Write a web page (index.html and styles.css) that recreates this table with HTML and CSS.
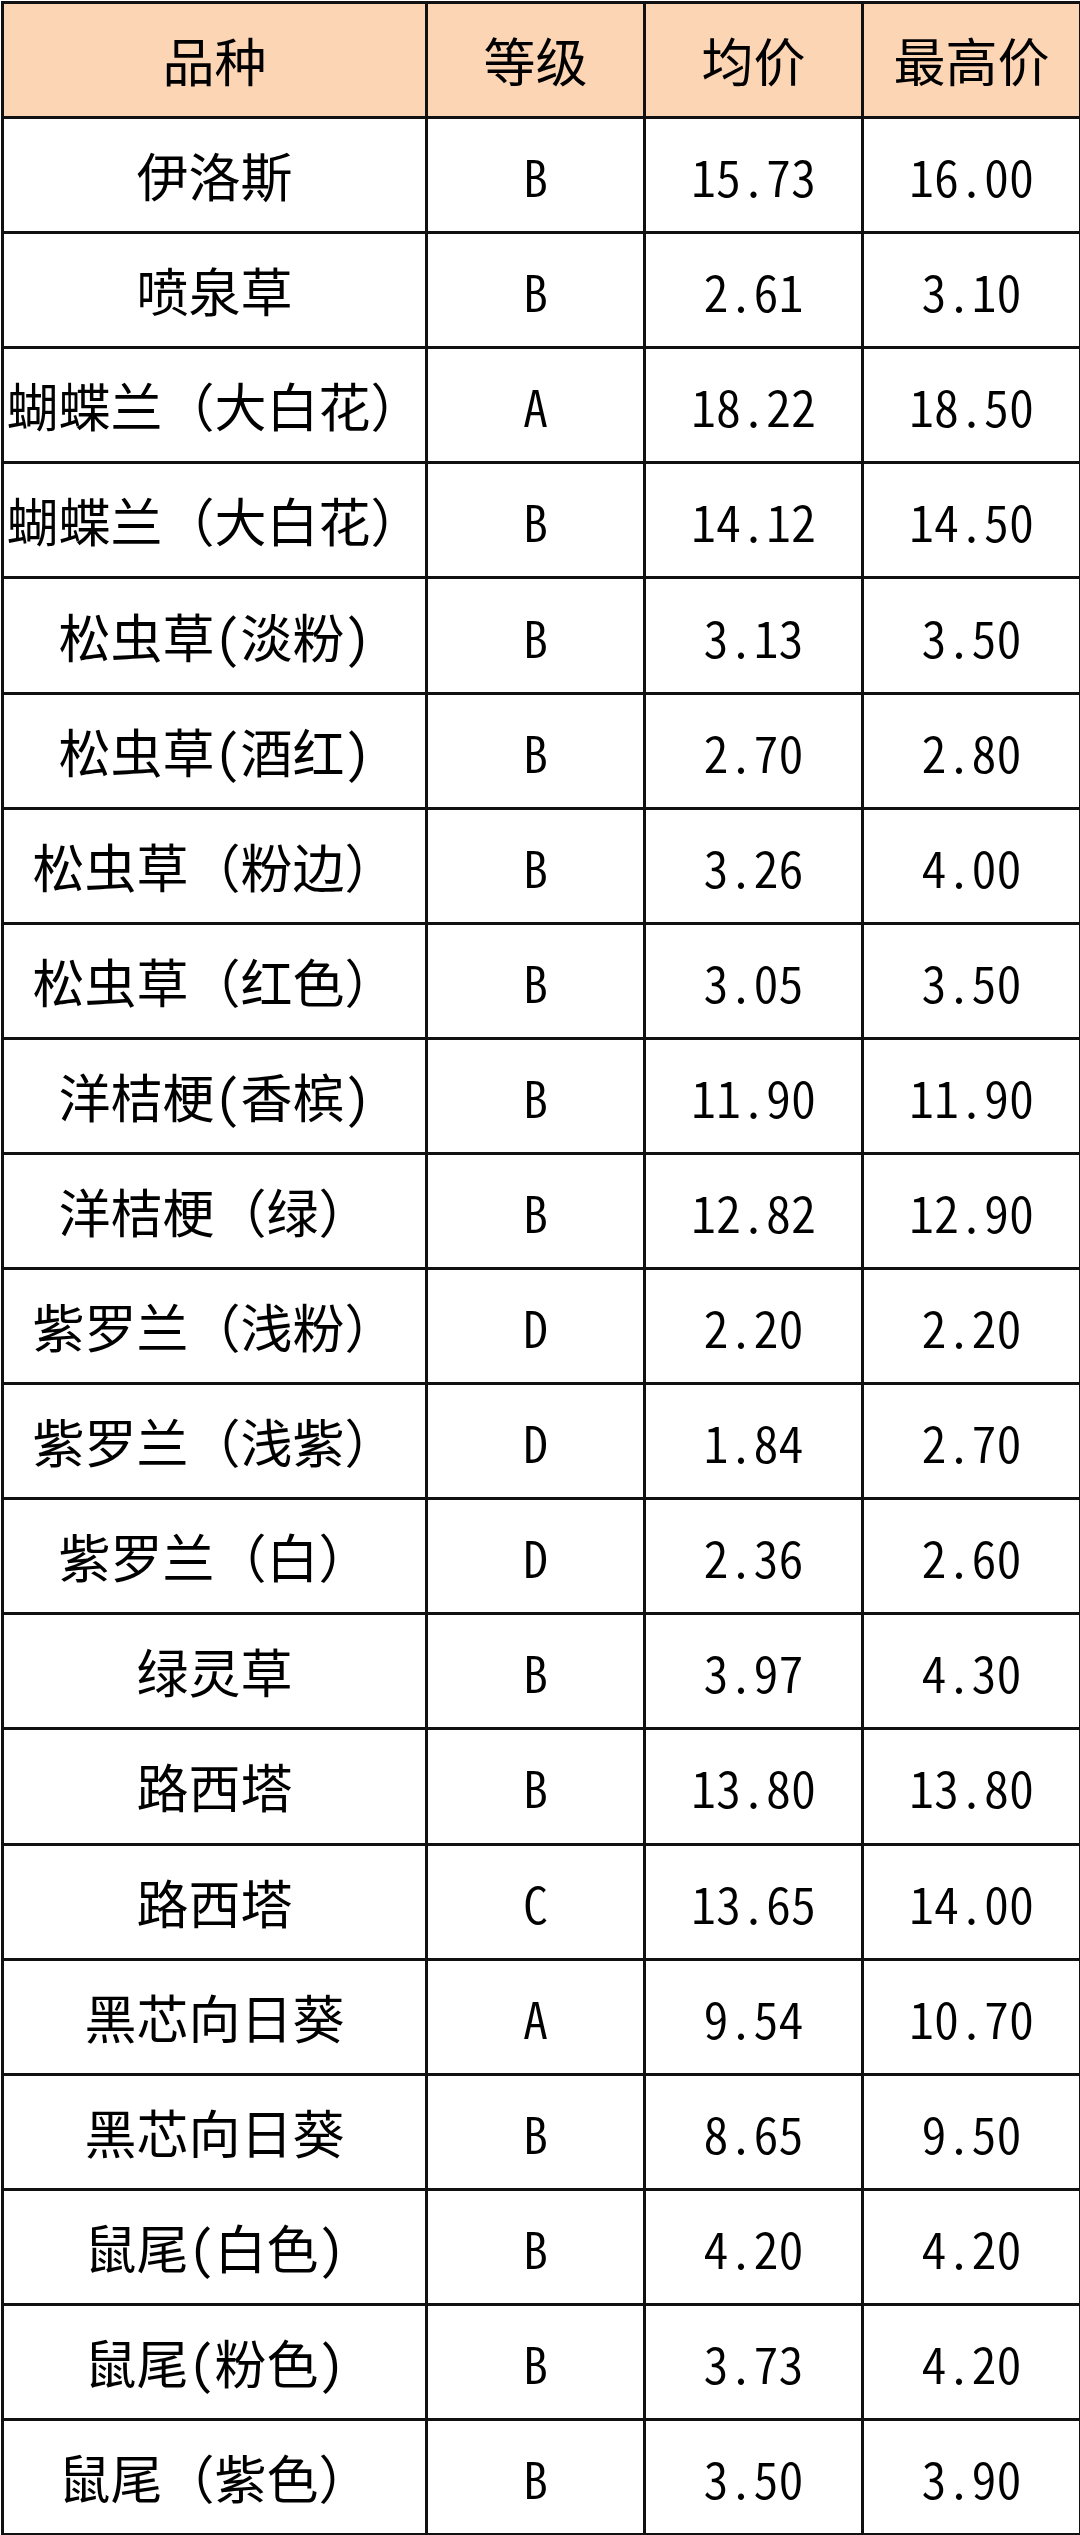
FILE: index.html
```html
<!DOCTYPE html>
<html lang="zh-CN">
<head>
<meta charset="utf-8">
<title>品种价格表</title>
<link rel="stylesheet" href="styles.css">
</head>
<body>
<div class="sheet">
<table class="price-table">
  <colgroup>
    <col class="c-name">
    <col class="c-grade">
    <col class="c-avg">
    <col class="c-max">
  </colgroup>
  <thead>
    <tr><th>品种</th><th>等级</th><th>均价</th><th>最高价</th></tr>
  </thead>
  <tbody>
    <tr><td>伊洛斯</td><td>B</td><td>15.73</td><td>16.00</td></tr>
    <tr><td>喷泉草</td><td>B</td><td>2.61</td><td>3.10</td></tr>
    <tr><td>蝴蝶兰（大白花）</td><td>A</td><td>18.22</td><td>18.50</td></tr>
    <tr><td>蝴蝶兰（大白花）</td><td>B</td><td>14.12</td><td>14.50</td></tr>
    <tr><td>松虫草<span class="hw">(</span>淡粉<span class="hw">)</span></td><td>B</td><td>3.13</td><td>3.50</td></tr>
    <tr><td>松虫草<span class="hw">(</span>酒红<span class="hw">)</span></td><td>B</td><td>2.70</td><td>2.80</td></tr>
    <tr><td>松虫草（粉边）</td><td>B</td><td>3.26</td><td>4.00</td></tr>
    <tr><td>松虫草（红色）</td><td>B</td><td>3.05</td><td>3.50</td></tr>
    <tr><td>洋桔梗<span class="hw">(</span>香槟<span class="hw">)</span></td><td>B</td><td>11.90</td><td>11.90</td></tr>
    <tr><td>洋桔梗（绿）</td><td>B</td><td>12.82</td><td>12.90</td></tr>
    <tr><td>紫罗兰（浅粉）</td><td>D</td><td>2.20</td><td>2.20</td></tr>
    <tr><td>紫罗兰（浅紫）</td><td>D</td><td>1.84</td><td>2.70</td></tr>
    <tr><td>紫罗兰（白）</td><td>D</td><td>2.36</td><td>2.60</td></tr>
    <tr><td>绿灵草</td><td>B</td><td>3.97</td><td>4.30</td></tr>
    <tr><td>路西塔</td><td>B</td><td>13.80</td><td>13.80</td></tr>
    <tr><td>路西塔</td><td>C</td><td>13.65</td><td>14.00</td></tr>
    <tr><td>黑芯向日葵</td><td>A</td><td>9.54</td><td>10.70</td></tr>
    <tr><td>黑芯向日葵</td><td>B</td><td>8.65</td><td>9.50</td></tr>
    <tr><td>鼠尾<span class="hw">(</span>白色<span class="hw">)</span></td><td>B</td><td>4.20</td><td>4.20</td></tr>
    <tr><td>鼠尾<span class="hw">(</span>粉色<span class="hw">)</span></td><td>B</td><td>3.73</td><td>4.20</td></tr>
    <tr><td>鼠尾（紫色）</td><td>B</td><td>3.50</td><td>3.90</td></tr>
  </tbody>
</table>
</div>
</body>
</html>
```
FILE: styles.css
```css
html, body {
  margin: 0;
  padding: 0;
  background: #ffffff;
}

.sheet {
  padding: 1px 0 0 1px;
  width: 1080px;
  height: 2535px;
  box-sizing: border-box;
  overflow: hidden;
}

.price-table {
  width: 1078px;
  height: 2533px;
  border-collapse: collapse;
  table-layout: fixed;
  font-family: "Noto Sans CJK SC", "Noto Sans", sans-serif;
  font-size: 52px;
  color: #000000;
}

.c-name { width: 424px; }
.c-grade { width: 218px; }
.c-avg { width: 218px; }
.c-max { width: 218px; }

.price-table th,
.price-table td {
  border: 3px solid #111111;
  padding: 0;
  text-align: center;
  vertical-align: middle;
  white-space: nowrap;
  line-height: 1;
  font-weight: normal;
}

.price-table td + td {
  font-feature-settings: "hwid" 1;
  font-size: 50px;
  font-weight: 350;
}

.hw {
  font-feature-settings: "hwid" 1;
}

.price-table th {
  background: #fcd5b4;
}

.price-table tr {
  height: 115.1px;
}
```
